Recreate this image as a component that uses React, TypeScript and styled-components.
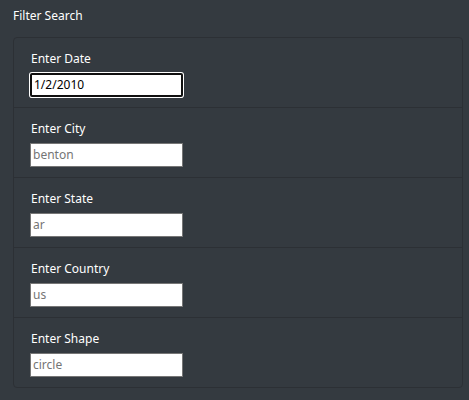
import React from "react";
import styled, { createGlobalStyle } from "styled-components";

const Global = createGlobalStyle`
  html, body { margin: 0; padding: 0; background: #343a40; }
  body { font-family: "Noto Sans", "Open Sans", sans-serif; color: #ffffff; }
`;

const Page = styled.div`
  width: 469px;
  height: 400px;
  box-sizing: border-box;
  padding: 6px 6px 0 13px;
  background: #343a40;
`;

const Title = styled.div`
  font-size: 12px;
  line-height: 20px;
  height: 20px;
  margin-bottom: 11px;
`;

const Panel = styled.ul`
  list-style: none;
  margin: 0;
  padding: 0;
  width: 450px;
  box-sizing: border-box;
  border: 1px solid #2c3035;
  border-radius: 4px;
`;

const Row = styled.li<{ $h: number }>`
  box-sizing: border-box;
  height: ${(p) => p.$h}px;
  padding: 11px 16px 0 16px;
  border-top: 1px solid #2c3035;
  &:first-child { border-top: none; }
`;

const Label = styled.label`
  display: block;
  font-size: 12px;
  line-height: 20px;
  margin-bottom: 3px;
  padding-left: 1px;
`;

const Input = styled.input<{ $focused?: boolean }>`
  box-sizing: border-box;
  width: 153px;
  height: 24px;
  margin: 0;
  padding: 1px 2px;
  font-family: "Noto Sans", "Open Sans", sans-serif;
  font-size: 12px;
  color: #000;
  background: #fff;
  border: ${(p) => (p.$focused ? "2px solid #101010" : "1px solid #767676")};
  box-shadow: ${(p) => (p.$focused ? "0 0 0 1px #ffffff" : "none")};
  outline: none;
  border-radius: ${(p) => (p.$focused ? "2px" : "0")};
  &::placeholder { color: #757575; }
`;

const fields = [
  { label: "Enter Date", value: "1/2/2010", focused: true },
  { label: "Enter City", placeholder: "benton" },
  { label: "Enter State", placeholder: "ar" },
  { label: "Enter Country", placeholder: "us" },
  { label: "Enter Shape", placeholder: "circle" },
];

export default function App() {
  return (
    <>
      <Global />
      <Page>
        <Title>Filter Search</Title>
        <Panel>
          {fields.map((f, i) => (
            <Row key={f.label} $h={i === 0 ? 69 : 70}>
              <Label>{f.label}</Label>
              <Input
                $focused={f.focused}
                defaultValue={f.value}
                placeholder={f.placeholder}
              />
            </Row>
          ))}
        </Panel>
      </Page>
    </>
  );
}
